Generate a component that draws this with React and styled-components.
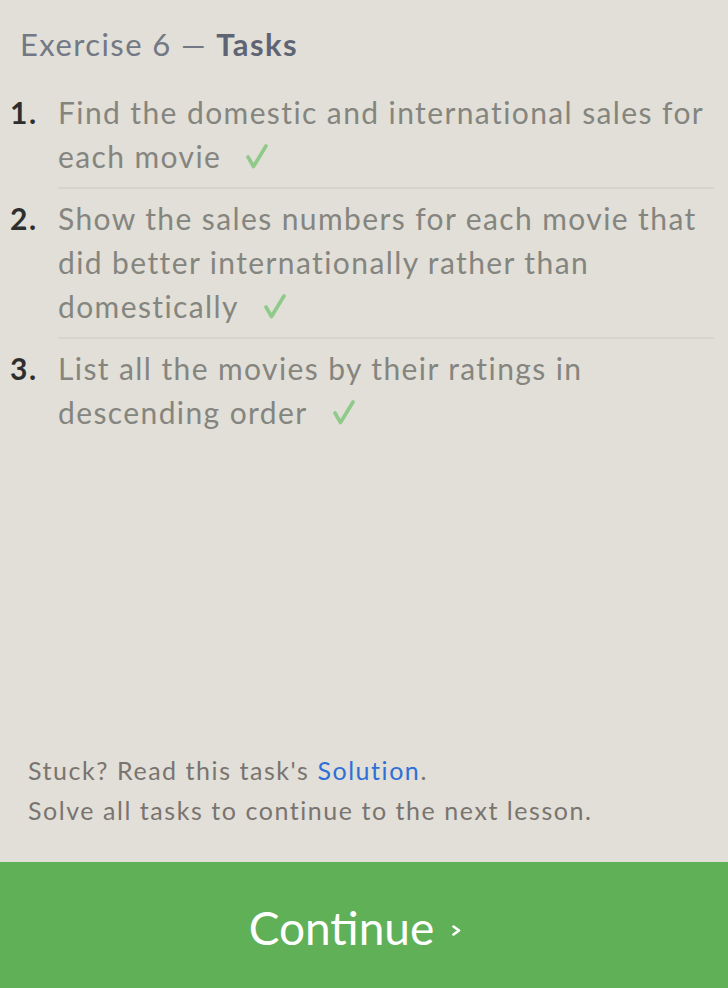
import React from 'react';
import styled, { createGlobalStyle } from 'styled-components';

const GlobalStyle = createGlobalStyle`
  html, body {
    margin: 0;
    padding: 0;
    background: #e1dfd7;
  }
  body {
    font-family: Lato, "Open Sans", sans-serif;
  }
`;

const Page = styled.div`
  min-height: 100vh;
  display: flex;
  flex-direction: column;
  background: #e1dfd7;
`;

const Content = styled.div`
  flex: 1;
  padding: 22px 14px 0 10px;
`;

const Heading = styled.h1`
  margin: 0 0 16px 10px;
  font-size: 31px;
  font-weight: 400;
  letter-spacing: 1.4px;
  color: #737885;
  line-height: 44px;

  b {
    font-weight: 700;
    color: #5f6475;
  }
`;

const TaskList = styled.ol`
  list-style: none;
  margin: 0;
  padding: 0;
`;

const Task = styled.li`
  display: flex;
  align-items: flex-start;
`;

const Num = styled.span`
  width: 48px;
  flex-shrink: 0;
  font-size: 30px;
  font-weight: 700;
  letter-spacing: 1.5px;
  line-height: 44px;
  color: #2e2e2e;
  padding-top: ${(p) => (p.$first ? '8px' : '7px')};
`;

const Body = styled.div`
  flex: 1;
  font-size: 30px;
  letter-spacing: 1.4px;
  line-height: 44px;
  color: #858580;
  padding: ${(p) => (p.$first ? '8px' : '7px')} 0 9px;
  border-bottom: ${(p) => (p.$last ? 'none' : '2px solid #d7d5cb')};
`;

const CheckIcon = styled.svg`
  width: 22px;
  height: 25px;
  margin-left: 25px;
  vertical-align: baseline;
  margin-bottom: -1px;
`;

const Footer = styled.div`
  padding: 0 0 32px 28px;
  font-size: 25px;
  letter-spacing: 1.55px;
  line-height: 40px;
  color: #7a7471;

  a {
    color: #2f6fd6;
    text-decoration: none;
  }
`;

const ContinueButton = styled.button`
  height: 126px;
  border: none;
  background: #60b057;
  color: #fff;
  font-family: Lato, "Open Sans", sans-serif;
  font-size: 46px;
  display: flex;
  align-items: center;
  justify-content: center;
  gap: 18px;
  padding: 5px 18px 0 0;
  cursor: pointer;
`;

const ChevronIcon = styled.svg`
  width: 9px;
  height: 11px;
  margin-top: 6px;
`;

const Check = () => (
  <CheckIcon viewBox="0 0 22 25">
    <polyline
      points="2,13 7.5,22.5 20,2"
      fill="none"
      stroke="#8fca8b"
      strokeWidth="3.6"
      strokeLinecap="round"
      strokeLinejoin="round"
    />
  </CheckIcon>
);

const tasks = [
  'Find the domestic and international sales for each movie',
  'Show the sales numbers for each movie that did better internationally rather than domestically',
  'List all the movies by their ratings in descending order',
];

export default function App() {
  return (
    <Page>
      <GlobalStyle />
      <Content>
        <Heading>
          Exercise 6 — <b>Tasks</b>
        </Heading>
        <TaskList>
          {tasks.map((t, i) => (
            <Task key={i}>
              <Num $first={i === 0}>{i + 1}.</Num>
              <Body $first={i === 0} $last={i === tasks.length - 1}>
                {t}
                <Check />
              </Body>
            </Task>
          ))}
        </TaskList>
      </Content>
      <Footer>
        Stuck? Read this task's <a href="#">Solution</a>.
        <br />
        Solve all tasks to continue to the next lesson.
      </Footer>
      <ContinueButton>
        Continue
        <ChevronIcon viewBox="0 0 9 11">
          <polyline
            points="1.5,1.5 7,5.5 1.5,9.5"
            fill="none"
            stroke="#fff"
            strokeWidth="2.6"
            strokeLinecap="round"
            strokeLinejoin="round"
          />
        </ChevronIcon>
      </ContinueButton>
    </Page>
  );
}
